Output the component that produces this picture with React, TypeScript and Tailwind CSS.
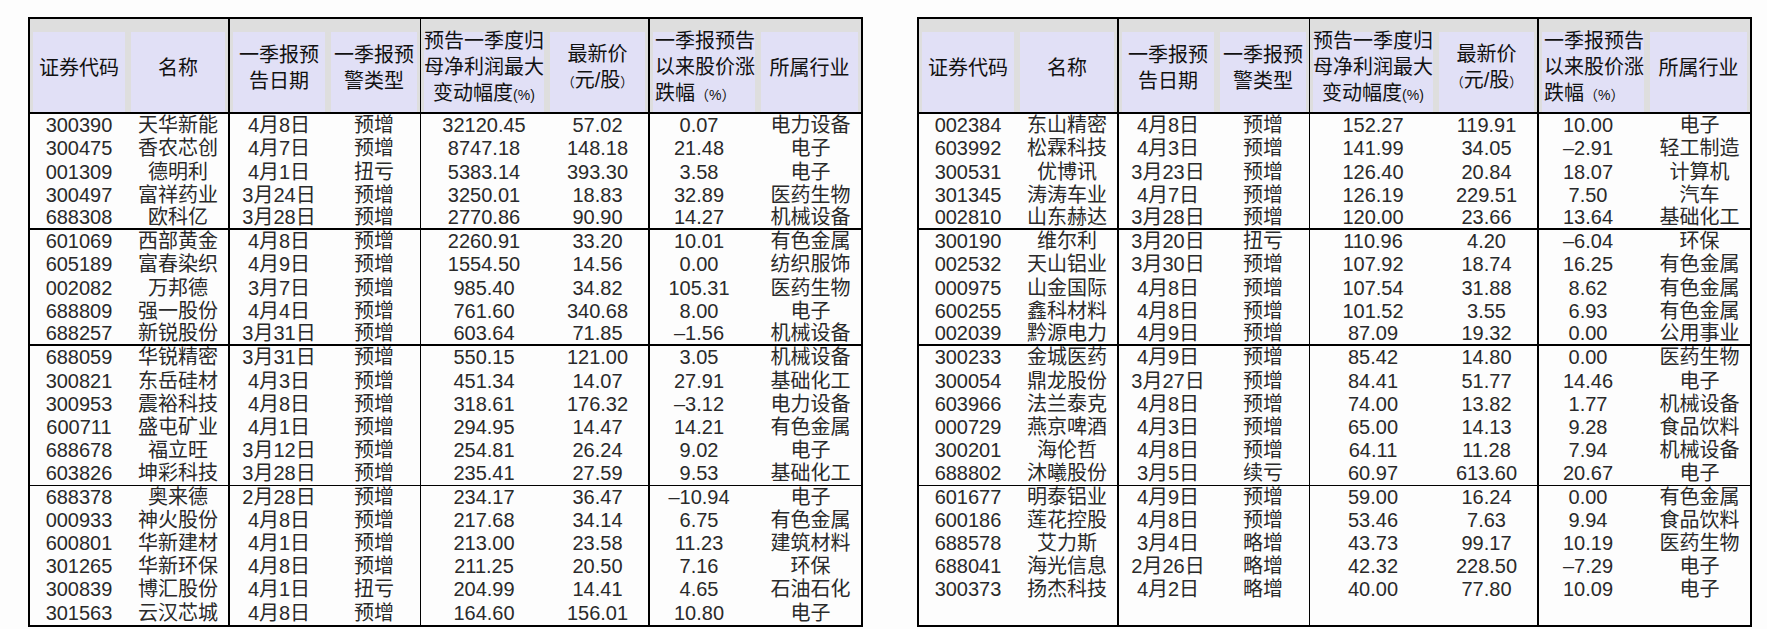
import React from "react";

type R = [string, string, string, string, string, string, string, string];

const left: R[][] = [
  [
    ["300390", "天华新能", "4月8日", "预增", "32120.45", "57.02", "0.07", "电力设备"],
    ["300475", "香农芯创", "4月7日", "预增", "8747.18", "148.18", "21.48", "电子"],
    ["001309", "德明利", "4月1日", "扭亏", "5383.14", "393.30", "3.58", "电子"],
    ["300497", "富祥药业", "3月24日", "预增", "3250.01", "18.83", "32.89", "医药生物"],
    ["688308", "欧科亿", "3月28日", "预增", "2770.86", "90.90", "14.27", "机械设备"],
  ],
  [
    ["601069", "西部黄金", "4月8日", "预增", "2260.91", "33.20", "10.01", "有色金属"],
    ["605189", "富春染织", "4月9日", "预增", "1554.50", "14.56", "0.00", "纺织服饰"],
    ["002082", "万邦德", "3月7日", "预增", "985.40", "34.82", "105.31", "医药生物"],
    ["688809", "强一股份", "4月4日", "预增", "761.60", "340.68", "8.00", "电子"],
    ["688257", "新锐股份", "3月31日", "预增", "603.64", "71.85", "–1.56", "机械设备"],
  ],
  [
    ["688059", "华锐精密", "3月31日", "预增", "550.15", "121.00", "3.05", "机械设备"],
    ["300821", "东岳硅材", "4月3日", "预增", "451.34", "14.07", "27.91", "基础化工"],
    ["300953", "震裕科技", "4月8日", "预增", "318.61", "176.32", "–3.12", "电力设备"],
    ["600711", "盛屯矿业", "4月1日", "预增", "294.95", "14.47", "14.21", "有色金属"],
    ["688678", "福立旺", "3月12日", "预增", "254.81", "26.24", "9.02", "电子"],
    ["603826", "坤彩科技", "3月28日", "预增", "235.41", "27.59", "9.53", "基础化工"],
  ],
  [
    ["688378", "奥来德", "2月28日", "预增", "234.17", "36.47", "–10.94", "电子"],
    ["000933", "神火股份", "4月8日", "预增", "217.68", "34.14", "6.75", "有色金属"],
    ["600801", "华新建材", "4月1日", "预增", "213.00", "23.58", "11.23", "建筑材料"],
    ["301265", "华新环保", "4月8日", "预增", "211.25", "20.50", "7.16", "环保"],
    ["300839", "博汇股份", "4月1日", "扭亏", "204.99", "14.41", "4.65", "石油石化"],
    ["301563", "云汉芯城", "4月8日", "预增", "164.60", "156.01", "10.80", "电子"],
  ],
];

const right: R[][] = [
  [
    ["002384", "东山精密", "4月8日", "预增", "152.27", "119.91", "10.00", "电子"],
    ["603992", "松霖科技", "4月3日", "预增", "141.99", "34.05", "–2.91", "轻工制造"],
    ["300531", "优博讯", "3月23日", "预增", "126.40", "20.84", "18.07", "计算机"],
    ["301345", "涛涛车业", "4月7日", "预增", "126.19", "229.51", "7.50", "汽车"],
    ["002810", "山东赫达", "3月28日", "预增", "120.00", "23.66", "13.64", "基础化工"],
  ],
  [
    ["300190", "维尔利", "3月20日", "扭亏", "110.96", "4.20", "–6.04", "环保"],
    ["002532", "天山铝业", "3月30日", "预增", "107.92", "18.74", "16.25", "有色金属"],
    ["000975", "山金国际", "4月8日", "预增", "107.54", "31.88", "8.62", "有色金属"],
    ["600255", "鑫科材料", "4月8日", "预增", "101.52", "3.55", "6.93", "有色金属"],
    ["002039", "黔源电力", "4月9日", "预增", "87.09", "19.32", "0.00", "公用事业"],
  ],
  [
    ["300233", "金城医药", "4月9日", "预增", "85.42", "14.80", "0.00", "医药生物"],
    ["300054", "鼎龙股份", "3月27日", "预增", "84.41", "51.77", "14.46", "电子"],
    ["603966", "法兰泰克", "4月8日", "预增", "74.00", "13.82", "1.77", "机械设备"],
    ["000729", "燕京啤酒", "4月3日", "预增", "65.00", "14.13", "9.28", "食品饮料"],
    ["300201", "海伦哲", "4月8日", "预增", "64.11", "11.28", "7.94", "机械设备"],
    ["688802", "沐曦股份", "3月5日", "续亏", "60.97", "613.60", "20.67", "电子"],
  ],
  [
    ["601677", "明泰铝业", "4月9日", "预增", "59.00", "16.24", "0.00", "有色金属"],
    ["600186", "莲花控股", "4月8日", "预增", "53.46", "7.63", "9.94", "食品饮料"],
    ["688578", "艾力斯", "3月4日", "略增", "43.73", "99.17", "10.19", "医药生物"],
    ["688041", "海光信息", "2月26日", "略增", "42.32", "228.50", "–7.29", "电子"],
    ["300373", "扬杰科技", "4月2日", "略增", "40.00", "77.80", "10.09", "电子"],
    ["", "", "", "", "", "", "", ""],
  ],
];

const cell = "flex items-center justify-center text-center whitespace-nowrap";

function Row({ r, sep }: { r: R; sep: string }) {
  return (
    <div className={`flex h-[23.23px] ${sep}`}>
      <div className={`w-[98px] ${cell}`}>{r[0]}</div>
      <div className={`w-[102px] border-r-2 border-black ${cell}`}>{r[1]}</div>
      <div className={`w-[98px] ${cell}`}>{r[2]}</div>
      <div className={`w-[93px] border-r border-black ${cell}`}>{r[3]}</div>
      <div className={`w-[126px] ${cell}`}>{r[4]}</div>
      <div className={`w-[103px] border-r-2 border-black ${cell}`}>{r[5]}</div>
      <div className={`w-[98px] ${cell}`}>{r[6]}</div>
      <div className={`w-[113px] pl-[12px] ${cell}`}>{r[7]}</div>
    </div>
  );
}

function HCell({
  w,
  children,
  align = "center",
}: {
  w: string;
  children: React.ReactNode;
  align?: "center" | "left";
}) {
  return (
    <div className={`${w} flex bg-[#dedede] px-[3px] pt-[13px]`}>
      <div
        className={
          align === "left"
            ? "flex flex-1 items-center justify-start whitespace-nowrap bg-[#e1e0f6] pb-[8px] pl-[2px] text-left leading-[26px]"
            : "flex flex-1 items-center justify-center whitespace-nowrap bg-[#e1e0f6] pb-[8px] text-center leading-[26px]"
        }
      >
        <div>{children}</div>
      </div>
    </div>
  );
}

function Table({ groups }: { groups: R[][] }) {
  const seps = ["border-b-2 border-black", "border-b-2 border-black", "border-b border-black", ""];
  return (
    <div className="flex w-[835px] flex-col border-2 border-black">
      <div className="flex h-[95px] border-b-2 border-black text-[#111]">
        <HCell w="w-[98px]">证券代码</HCell>
        <div className="w-[102px] border-r-2 border-black">
          <div className="flex h-full">
            <HCell w="w-full">名称</HCell>
          </div>
        </div>
        <HCell w="w-[98px]">
          一季报预
          <br />
          告日期
        </HCell>
        <div className="w-[93px] border-r border-black">
          <div className="flex h-full">
            <HCell w="w-full">
              一季报预
              <br />
              警类型
            </HCell>
          </div>
        </div>
        <HCell w="w-[126px]">
          预告一季度归
          <br />
          母净利润最大
          <br />
          变动幅度<span className="text-[14px]">(%)</span>
        </HCell>
        <div className="w-[103px] border-r-2 border-black">
          <div className="flex h-full">
            <HCell w="w-full">
              最新价
              <br />
              <span className="text-[13px]">（</span>元/股<span className="text-[13px]">）</span>
            </HCell>
          </div>
        </div>
        <HCell w="w-[108px]" align="left">
          一季报预告
          <br />
          以来股价涨
          <br />
          跌幅<span className="text-[14px]">（%）</span>
        </HCell>
        <div className="flex w-[103px]">
          <HCell w="w-full">所属行业</HCell>
        </div>
      </div>
      <div className="flex flex-col text-[#2a2a2a]">
        {groups.map((g, gi) =>
          g.map((r, ri) => (
            <Row key={`${gi}-${ri}`} r={r} sep={ri === g.length - 1 ? seps[gi] : ""} />
          ))
        )}
      </div>
    </div>
  );
}

export default function App() {
  return (
    <div className="min-h-[629px] w-[1767px] bg-[#fdfdfd] pl-[28px] pt-[17px] font-['Liberation_Sans','Noto_Sans_CJK_SC',sans-serif] text-[20px] leading-[23px]">
      <div className="flex gap-[54px]">
        <Table groups={left} />
        <Table groups={right} />
      </div>
    </div>
  );
}
